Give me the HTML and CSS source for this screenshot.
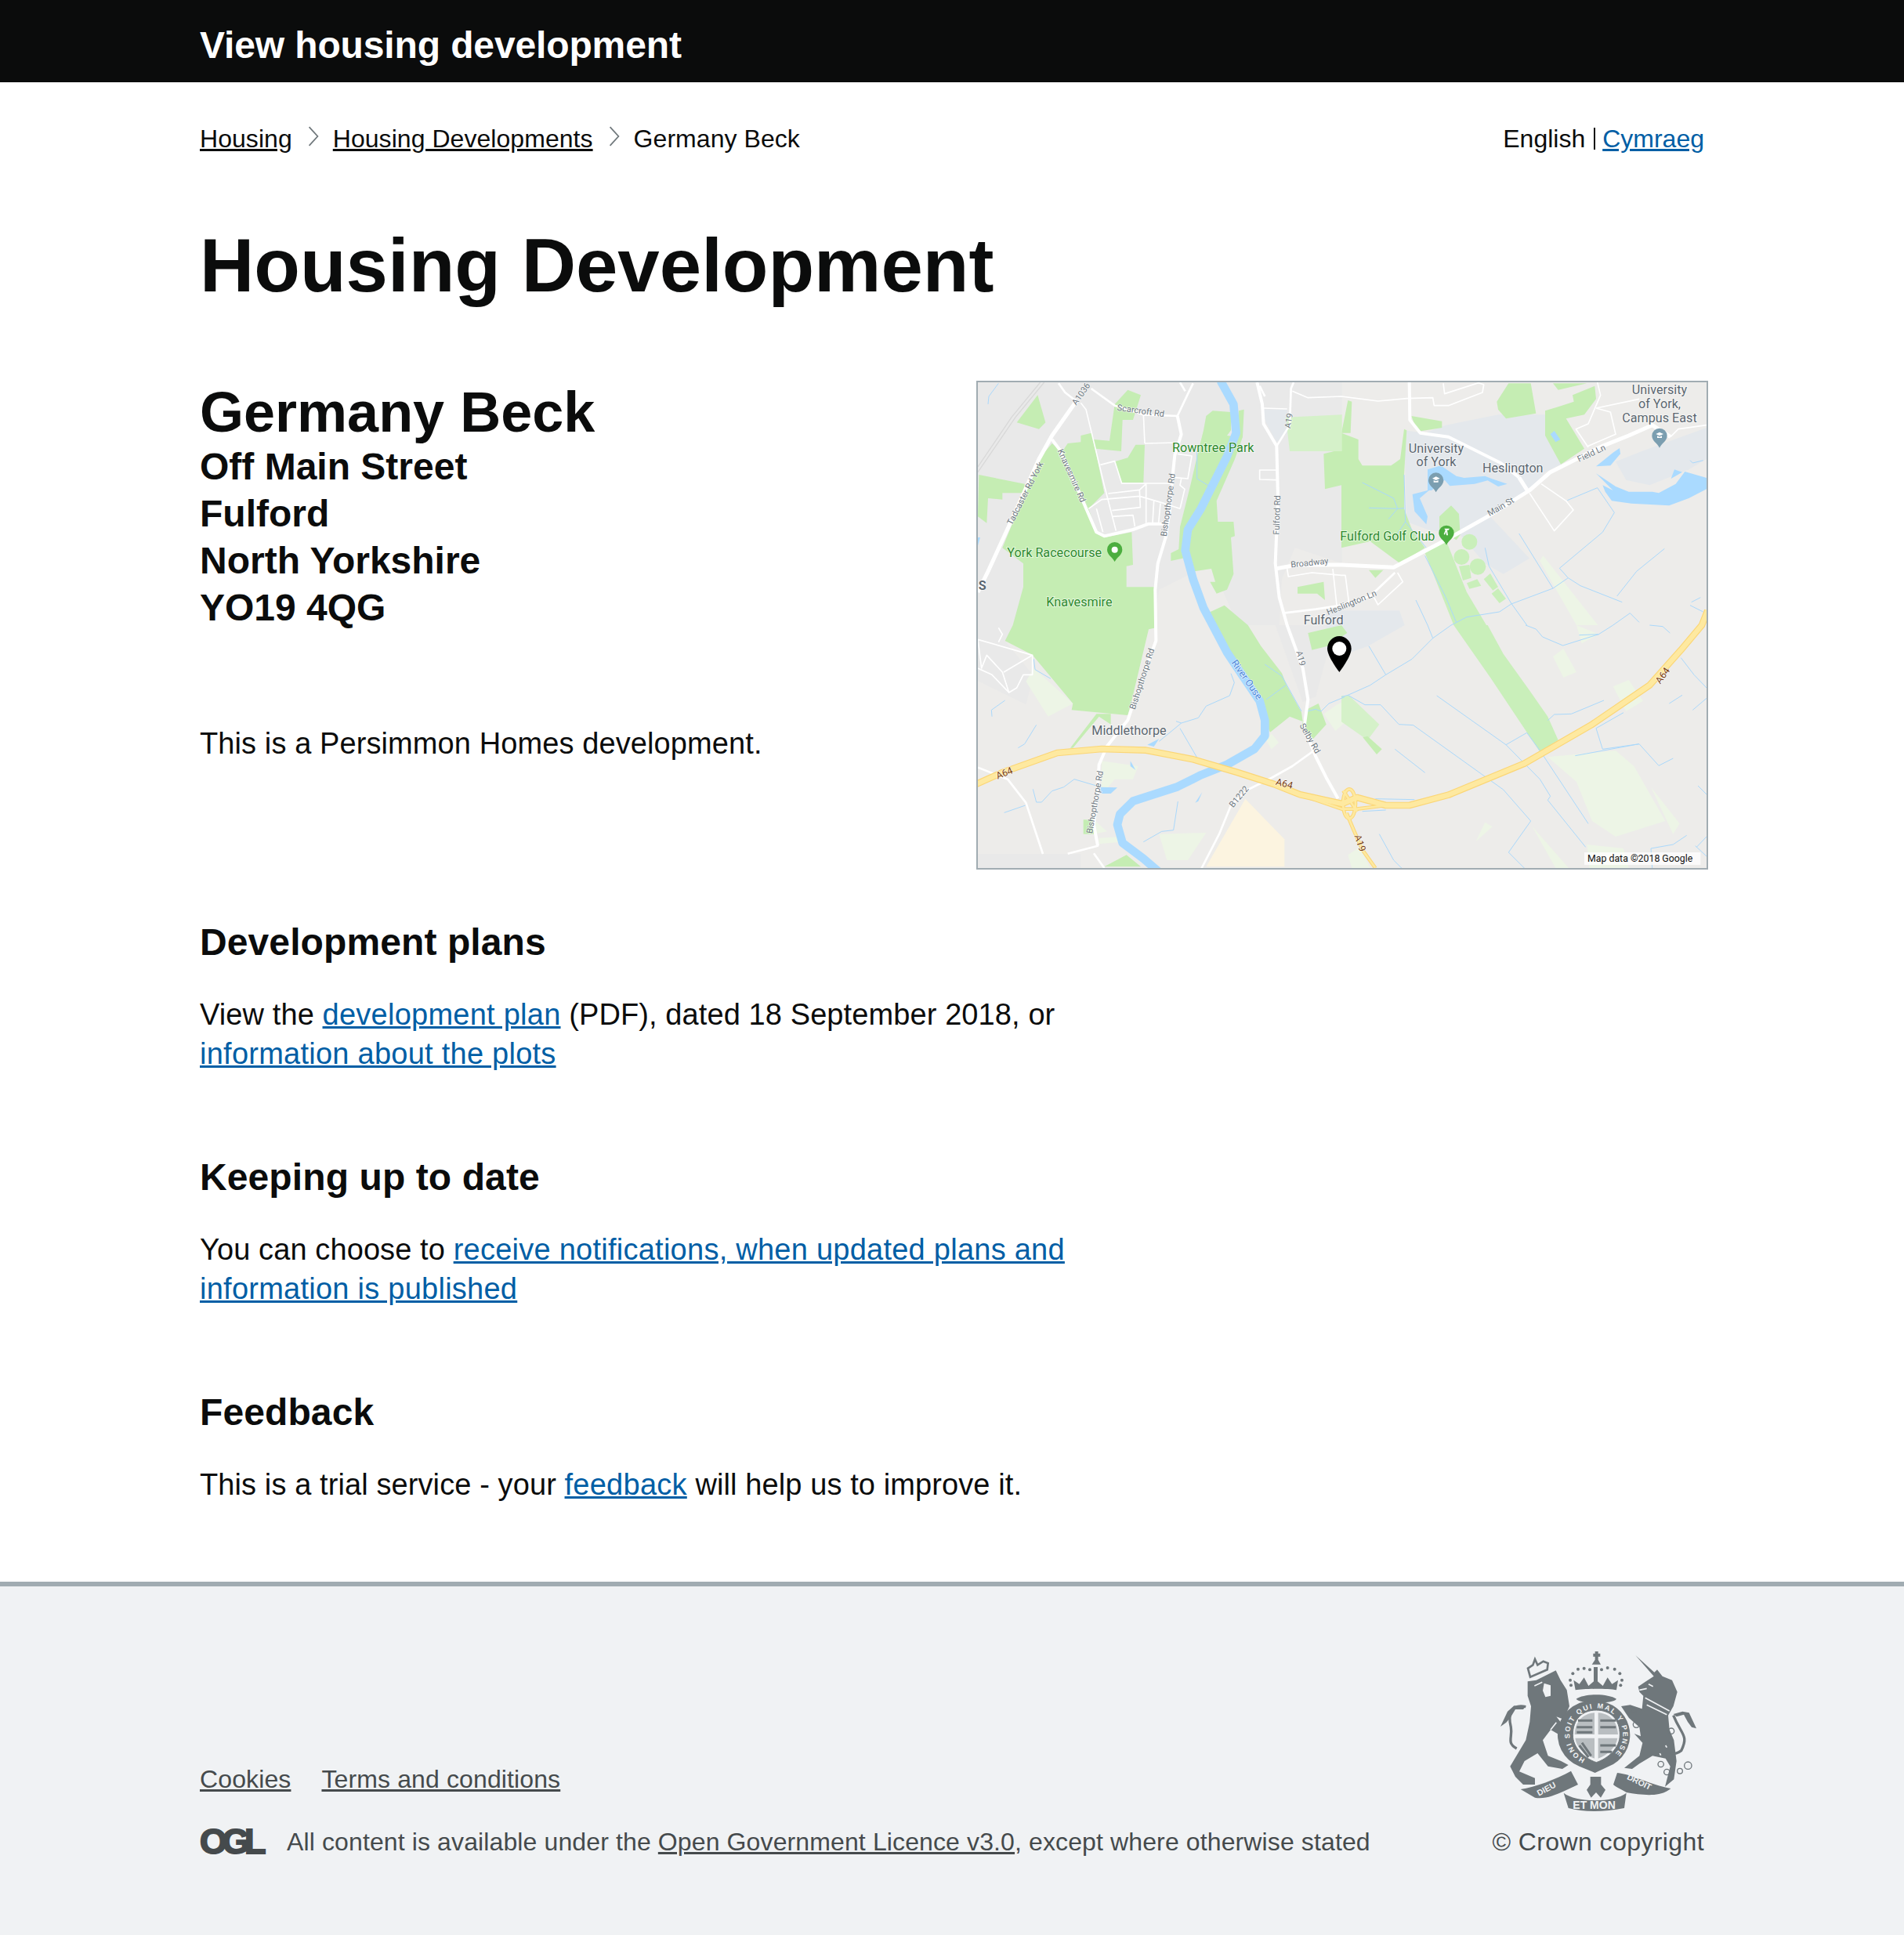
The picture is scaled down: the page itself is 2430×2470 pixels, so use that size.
FILE: index.html
```html
<!DOCTYPE html>
<html lang="en">
<head>
<meta charset="utf-8">
<title>View housing development</title>
<link rel="stylesheet" href="styles.css">
</head>
<body>
<header class="topbar"><div class="topbar-title">View housing development</div></header>
<main class="page">
  <div class="navrow">
    <nav class="crumbs">
      <a href="#" class="crumb-link">Housing</a>
      <svg class="chev" viewBox="0 0 12 24"><path d="M1 1 L11 12 L1 23"/></svg>
      <a href="#" class="crumb-link">Housing Developments</a>
      <svg class="chev" viewBox="0 0 12 24"><path d="M1 1 L11 12 L1 23"/></svg>
      <span>Germany Beck</span>
    </nav>
    <div class="lang"><span>English</span><span class="lang-sep"></span><a href="#" class="link">Cymraeg</a></div>
  </div>
  <h1 class="title">Housing Development</h1>
  <section class="hero">
    <div class="hero-text">
      <h2 class="site-name">Germany Beck</h2>
      <p class="address">Off Main Street<br>Fulford<br>North Yorkshire<br>YO19 4QG</p>
      <p class="para developer">This is a Persimmon Homes development.</p>
    </div>
    <div class="map">
      <svg class="map-svg" viewBox="6 6 2790 1860" preserveAspectRatio="none">
        <rect class="m-base" x="0" y="0" width="2802" height="1872"/>
        <g class="m-urban">
          <path d="M6 6H1400V700L1220 640 1170 760 1160 936H1000L900 700 700 800 680 936H150L110 996 220 1130 190 1240 6 1150Z"/>
          <path d="M1145 936H1398L1340 1060 1300 1210 1250 1230Z"/>
          <path d="M6 1812H400V1866H6Z"/>
        </g>
        <g class="m-campus">
          <path d="M1090 110H1190V200L1150 235 1110 160Z"/>
          <path d="M1638 190 1718 200 1798 170 1998 130 2178 130 2178 210 2238 320 2178 350 2118 420 1958 510 2118 680 2018 740 1948 700 1853 590 1728 570 1648 540Z"/>
          <path d="M2448 310 2548 270 2796 180V300L2728 340 2578 400 2488 380Z"/>
          <path d="M1340 880 1620 880 1640 936 1500 1016 1420 1045 1340 1030Z"/>
        </g>
        <g class="m-tan"><path d="M880 1861 1030 1601 1180 1756V1861Z"/></g>
        <g class="m-pale">
          <g transform="translate(0 936)">
            <path d="M190 215 220 165 370 300 275 350Z"/>
            <path d="M1110 440 1130 415 1158 450 1130 475Z"/>
            <path d="M700 800 880 795 810 900 730 900Z"/>
            <path d="M410 745 450 745 500 790 450 800 410 800Z"/>
            <path d="M480 520 620 540 600 590 530 590 480 650Z"/>
            <path d="M470 815 555 810 555 830 470 838Z"/>
            <path d="M1330 340 1380 305 1410 290 1460 330 1375 405Z"/>
          </g>
          <g transform="translate(1398 936)">
            <path d="M810 120 850 90 900 180 850 200Z"/>
            <path d="M1040 235 1100 210 1155 290 1090 330Z"/>
            <path d="M900 0 985 35 920 70Z"/>
            <path d="M790 505 1050 480 1120 540 1240 750 1050 810 960 750 900 600Z"/>
            <path d="M1185 620 1295 760 1270 800Z"/>
            <path d="M550 755 578 772 515 828Z"/>
            <path d="M730 770 870 930 820 930Z"/>
            <path d="M940 840 1080 855 1100 930 950 930Z"/>
            <path d="M25 880 70 850 110 930 40 930Z"/>
          </g>
          <path d="M2158 690 2298 936H2380L2170 670Z"/>
        </g>
        <g class="m-park">
          <path d="M290 240 325 270 430 490 460 580 490 600 595 580 600 705 575 710 575 790 680 790 688 946 660 952 590 1246 580 1281 365 1261 370 1236 215 1050 110 996 140 936 180 790 180 700 100 640 240 300Z"/>
          <path d="M155 160 235 55 265 160 240 185Z"/>
          <path d="M10 360 185 395 185 430 100 430 100 455 45 450 40 545 6 520Z"/>
          <path d="M350 240 400 235 400 210 440 200 450 225 510 230 530 90 580 35 630 55 600 150 560 150 555 270 455 260 490 430 430 490 330 270Z"/>
          <path d="M530 310 580 295 610 245 645 245 640 390 555 390Z"/>
          <path d="M880 135 905 115 975 120 975 190 960 210 1000 215 1005 115 1025 110 1020 215 990 300 920 460 925 540 985 540 990 595 975 600 985 740 960 800 920 815 895 770 915 770 900 720 835 730 810 670 790 680 745 690 745 660 775 645 780 560 820 400 850 270 870 190Z"/>
          <path d="M885 890 950 860 1040 936 1090 1016 1170 1120 1190 1170 1245 1270 1250 1305 1200 1286 1125 1346 1105 1300 1085 1226 1020 1130 960 1040 905 936Z"/>
          <path d="M1330 280 1370 270 1370 200 1398 200 1463 225 1463 300 1478 325 1588 325 1623 300 1638 185 1648 190 1638 360 1638 490 1668 570 1718 640 1623 700 1508 615 1398 640 1398 400 1335 415Z"/>
          <path d="M1423 75 1438 80 1433 200 1398 200Z"/>
          <path d="M1230 790 1330 770 1335 840 1305 815 1230 815Z"/>
          <path d="M1773 520 1818 478 1848 510 1853 590 1838 610 1773 570Z"/>
          <path d="M1666 135 1783 155 1783 180 1688 195Z"/>
          <path d="M1993 80 2038 10 2123 10 2143 125 2028 145 1998 110Z"/>
          <path d="M2178 115 2228 100 2288 80 2283 55 2368 20 2373 70 2328 130 2258 145 2328 260 2238 320 2178 210Z"/>
          <path d="M2208 10 2338 10 2228 35Z"/>
          <path d="M1503 725 1558 725 1528 755Z"/>
          <g transform="translate(0 936)">
            <path d="M1270 30 1398 0 1420 30 1345 80 1285 95Z"/>
            <path d="M1270 320 1310 300 1340 380 1290 435 1245 385Z"/>
            <path d="M360 470 460 340 515 340 515 380 470 350 370 470Z"/>
            <path d="M490 925 575 880 630 925Z"/>
            <path d="M410 745 450 745 450 800 410 800Z"/>
          </g>
        </g>
        <g class="m-park2">
          <path d="M1718 660 1798 610 1878 810 1953 936 1828 936Z"/>
          <path d="M1828 936 1958 936 2018 1046 2118 1186 2188 1286 2228 1376 2158 1421 2068 1286 1968 1136Z"/>
          <circle cx="1888" cy="617" r="30"/>
          <circle cx="1920" cy="712" r="31"/>
          <circle cx="1858" cy="675" r="30"/>
          <path d="M1848 710 1888 705 1895 755 1863 765Z"/>
          <path d="M1878 775 1918 760 1933 785 1888 797Z"/>
          <path d="M1943 760 1968 738 1998 790 1978 803Z"/>
          <path d="M1973 815 1998 795 2028 835 2003 852Z"/>
        </g>
        <g class="m-park3">
          <path d="M1400 270 1200 270 1185 140 1400 130Z"/>
          <path d="M1398 1206 1428 1206 1543 1316 1498 1376 1398 1306Z"/>
        </g>
        <g class="m-park">
          <path d="M1480 1366 1498 1361 1553 1411 1533 1431Z"/>
        </g>
        <g class="m-water">
          <path d="M1728 340 1778 325 1838 365 1868 372 1948 365 1973 375 2033 395 1998 405 1958 382 1908 395 1813 403 1793 380 1743 420 1733 420 1698 450 1728 520 1723 550 1678 500 1670 435 1728 420Z"/>
          <path d="M2373 328 2438 275 2463 258 2466 280 2428 325Z"/>
          <path d="M2373 355 2448 405 2498 425 2588 425 2613 430 2678 395 2713 348 2796 372V415L2728 450 2653 478 2508 470 2433 460 2408 425 2398 400 2438 420Z"/>
          <path d="M2660 375 2673 340 2703 350Z"/>
          <path d="M2198 205 2213 192 2236 225 2218 235Z"/>
          <path d="M475 1556 540 1558 515 1581 480 1581Z"/>
          <path d="M655 1394 700 1371 680 1401Z"/>
          <path d="M590 1456 610 1491 590 1476Z"/>
          <path d="M838 1616 865 1576 850 1610Z"/>
          <path d="M3 600H15L5 635H3Z"/>
        </g>
        <path class="m-river" d="M935 0 985 90 995 200 960 290 900 410 860 490 810 570 800 650 830 760 870 870 905 936 960 1040 1020 1130 1085 1226 1105 1300 1105 1360 1065 1410 960 1470 860 1510 770 1555 600 1610 550 1660 540 1700 560 1770 640 1830 710 1890"/>
        <g class="m-wline">
          <path d="M845 270 845 375 895 405M45 90 48 60 85 10"/>
          <g transform="translate(1398 0)">
            <path d="M80 390 200 450 215 490 180 530M105 487 215 490 240 488"/>
            <path d="M240 360 245 540 325 640M245 540 215 585"/>
            <path d="M320 670 400 830 440 925M285 840 330 936"/>
            <path d="M550 640 565 710 650 852 710 936M680 585 810 795"/>
            <path d="M420 936 480 905 605 885 650 855 810 795 868 755 835 718 1000 580 1045 505 980 410 865 458"/>
            <path d="M868 755 915 785 1075 848M1055 825 1130 730 1237 643"/>
            <path d="M1340 848 1375 830M1335 860 1385 885M1040 936 1105 890 1140 925M1335 305 1345 315 1385 305"/>
          </g>
          <g transform="translate(0 936)">
            <path d="M60 350 58 325 110 288M160 470 185 455 230 382M220 130 225 170 285 205"/>
            <path d="M217 628 230 678 250 678 290 635 335 620 375 590 460 615M107 718 188 690"/>
            <path d="M700 445 785 375 850 355 880 310 970 270 988 220 975 185M765 368 785 375M780 395 848 512"/>
            <path d="M640 830 710 790 755 785 772 675"/>
            <path d="M1105 150 1170 195 1245 330M1185 230 1110 285M1265 330 1300 322 1320 330 1350 300 1410 275"/>
          </g>
          <g transform="translate(1398 936)">
            <path d="M105 80 170 190M0 275 25 268 110 230 170 190 270 130 350 50 420 0M330 0 350 50"/>
            <path d="M25 268 90 305 150 305 220 380 275 383 550 580 620 630 725 750 640 870 700 930"/>
            <path d="M365 270 630 458 760 590 800 655 790 670 935 850M630 458 710 412 760 480 945 760"/>
            <path d="M205 475 320 565M790 365 815 342 880 340 1005 288"/>
            <path d="M975 395 1000 475 1140 455 1215 538 1270 510M895 500 1140 455M975 395 1080 335"/>
            <path d="M1255 300 1305 268M1345 325 1398 280M1300 125 1350 190 1398 240"/>
            <path d="M705 0 745 15 770 45 848 78 985 35 910 38M985 35 1040 0M1180 0 1230 5 1258 30"/>
            <path d="M145 800 200 900 230 930M1185 855 1270 840 1322 805M1185 855 1190 930M1365 615 1398 648M1355 845 1398 885M1398 810 1360 850"/>
            <path d="M80 713 170 708M130 665 280 668"/>
          </g>
        </g>
        <g class="m-rail"><path d="M260 6 150 140 6 350M245 6 135 140 6 330"/></g>
        <g class="m-road3">
          <path d="M400 85 420 110 490 400 535 575M645 240 770 237M640 130 645 240"/>
          <path d="M475 322 530 308 557 393 740 393M505 432 625 418 650 395M625 418 628 485 520 497M430 490 480 455 625 442 720 470 780 490M650 395V545M520 520 600 515 607 558M460 490 485 580M680 460 675 545M705 470 698 545"/>
          <path d="M770 280 825 288 810 375 755 370M785 375 780 400 798 415 780 490"/>
          <path d="M1100 105 1190 108M1150 342H1085V378L1150 380M1210 40 1270 65 1398 60 1538 78 1648 68 1748 65 1753 95 1808 95 1938 45 1943 15 1923 8 1793 50 1788 10"/>
          <path d="M1190 720 1195 750 1285 735 1398 745 1413 745 1428 860M1365 720 1380 860"/>
          <path d="M1613 735 1633 770 1538 858 1523 830"/>
          <path d="M2118 430 2213 575 2286 495 2258 460 2163 395"/>
          <path d="M2378 6 2390 55 2343 165 2296 185 2343 255M2373 105 2428 120 2448 205 2343 250M2373 105 2538 70"/>
          <path d="M2658 215 2688 185 2796 170"/>
          <g transform="translate(0 936)">
            <path d="M6 55 215 115 215 190 180 190 155 240 125 258 100 180 40 115 20 165ZM105 180 215 115M85 65 100 35 85 10M6 165 60 190 125 258"/>
          </g>
        </g>
        <g class="m-road5">
          <path d="M440 30 530 95 640 130 770 135 815 40 830 10"/>
          <path d="M315 10 340 45 385 80M780 6 800 40"/>
          <path d="M1175 890 1300 875 1398 860 1508 825 1603 735"/>
          <path d="M1150 250 1200 170 1205 30 1215 6M1085 20 1105 60"/>
          <path d="M1300 1411 1210 1476 1130 1521 1040 1566 975 1626 930 1736 860 1872"/>
          <path d="M6 1481 120 1526 190 1616 255 1812M350 1811 465 1781 450 1700M450 1810 490 1866"/>
        </g>
        <g class="m-road8">
          <path d="M770 135 785 205 760 285 750 380 740 500 725 600 695 700 685 800 688 996 650 1100 600 1240 580 1300 540 1350 500 1400 470 1470 465 1560 450 1700 465 1780"/>
          <path d="M1075 6 1095 90 1100 165 1150 250 1155 450 1145 700 1160 830 1190 936 1250 1100 1270 1220 1255 1330 1300 1440 1340 1520 1385 1600"/>
          <path d="M1658 6 1660 150 1700 200 1808 215 2008 315 2078 370"/>
          <path d="M290 225 320 265 395 430 460 580 490 595 600 570 660 548 720 548"/>
        </g>
        <g class="m-road12">
          <path d="M385 75 290 210 240 300 130 545 45 730 6 810"/>
          <path d="M1145 720 1230 705 1398 705 1598 715 1798 610 1958 520 2118 420 2198 350 2398 250 2498 210 2588 170 2658 215"/>
          <path d="M2078 370 2113 425"/>
        </g>
        <g class="m-a64a"><path d="M0 1545 100 1500 310 1425 480 1410 650 1415 830 1450 1000 1500 1140 1545 1240 1585 1400 1620 1458 1596 1568 1626 1658 1626 1808 1586 2098 1466 2358 1316 2578 1166 2698 1031 2778 936 2800 880"/></g>
        <g class="m-a64b">
          <path d="M1240 1585 1400 1640 1458 1640 1568 1626"/>
          <ellipse cx="1428" cy="1620" rx="24" ry="56"/>
          <path d="M1418 1656 1443 1716 1478 1796 1528 1866M1405 1570 1458 1650"/>
        </g>
        <g class="m-a64c"><path d="M0 1545 100 1500 310 1425 480 1410 650 1415 830 1450 1000 1500 1140 1545 1240 1585 1400 1620 1458 1596 1568 1626 1658 1626 1808 1586 2098 1466 2358 1316 2578 1166 2698 1031 2778 936 2800 880"/></g>
        <g class="m-a64d">
          <path d="M1240 1585 1400 1640 1458 1640 1568 1626"/>
          <ellipse cx="1428" cy="1620" rx="24" ry="56"/>
          <path d="M1418 1656 1443 1716 1478 1796 1528 1866M1405 1570 1458 1650"/>
        </g>

        <g class="m-pin-green">
          <path d="M530 618a29 29 0 0 1 29 29c0 20-20 28-29 46-9-18-29-26-29-46a29 29 0 0 1 29-29z"/>
          <path d="M1800 554a29 29 0 0 1 29 29c0 20-20 28-29 46-9-18-29-26-29-46a29 29 0 0 1 29-29z"/>
        </g>
        <g class="m-pin-blue">
          <path d="M1760 352a29 29 0 0 1 29 29c0 20-20 28-29 46-9-18-29-26-29-46a29 29 0 0 1 29-29z"/>
          <path d="M2616 182a29 29 0 0 1 29 29c0 20-20 28-29 46-9-18-29-26-29-46a29 29 0 0 1 29-29z"/>
        </g>
        <g class="m-pin-inner">
          <circle cx="530" cy="647" r="12"/>
          <path d="M1746 374 1760 367 1775 374 1760 381ZM1751 381 1760 385 1769 381V389H1751Z"/>
          <path d="M2602 204 2616 197 2631 204 2616 211ZM2607 211 2616 215 2625 211V219H2607Z"/>
          <path d="M1792 566H1812L1808 572H1803L1806 592 1800 592 1798 578 1794 590 1790 587 1796 572Z"/>
        </g>

        <g class="m-tx m-green">
          <text x="750" y="272">Rowntree Park</text>
          <text x="118" y="676">York Racecourse</text>
          <text x="268" y="864">Knavesmire</text>
          <text x="1393" y="612">Fulford Golf Club</text>
        </g>
        <g class="m-tx m-grey">
          <text x="1761" y="275" class="m-mid">University</text>
          <text x="1761" y="328" class="m-mid">of York</text>
          <text x="1938" y="352">Heslington</text>
          <text x="2616" y="52" class="m-mid">University</text>
          <text x="2616" y="105" class="m-mid">of York,</text>
          <text x="2616" y="158" class="m-mid">Campus East</text>
          <text x="1253" y="934">Fulford</text>
          <text x="442" y="1355">Middlethorpe</text>
          <text x="8" y="800" class="m-es">S</text>
        </g>
        <g class="m-lbl">
          <text transform="translate(410 57) rotate(-55)">A1036</text>
          <text transform="translate(628 126) rotate(8)">Scarcroft Rd</text>
          <text transform="translate(197 436) rotate(-63)">Tadcaster Rd York</text>
          <text transform="translate(355 368) rotate(66)">Knavesmire Rd</text>
          <text transform="translate(745 477) rotate(-82)">Bishopthorpe Rd</text>
          <text transform="translate(1207 155) rotate(-80)">A19</text>
          <text transform="translate(1162 515) rotate(-88)">Fulford Rd</text>
          <text transform="translate(1277 708) rotate(-6)">Broadway</text>
          <text transform="translate(1441 860) rotate(-22)">Heslington Ln</text>
          <text transform="translate(2360 288) rotate(-25)">Field Ln</text>
          <text transform="translate(2013 492) rotate(-30)">Main St</text>
          <text transform="translate(1232 1066) rotate(75)">A19</text>
          <text transform="translate(1268 1375) rotate(60)">Selby Rd</text>
          <text transform="translate(645 1145) rotate(-72)">Bishopthorpe Rd</text>
          <text transform="translate(465 1616) rotate(-80)">Bishopthorpe Rd</text>
          <text transform="translate(1014 1600) rotate(-50)">B1222</text>
        </g>
        <g class="m-lbl m-river-lbl"><text transform="translate(1026 1152) rotate(55)">River Ouse</text></g>
        <g class="m-lbl m-brown">
          <text transform="translate(112 1514) rotate(-22)">A64</text>
          <text transform="translate(1176 1555) rotate(15)">A64</text>
          <text transform="translate(2638 1136) rotate(-55)">A64</text>
          <text transform="translate(1458 1774) rotate(72)">A19</text>
        </g>
        <path class="m-pin-black" d="M1390 978c-25 0-46 21-46 48 0 30 46 90 46 90s46-60 46-90c0-27-21-48-46-48z"/>
        <circle class="m-pin-hole" cx="1390" cy="1026" r="27"/>
        <rect class="m-credit-bg" x="2328" y="1806" width="445" height="48"/>
        <text class="m-credit" x="2340" y="1842">Map data ©2018 Google</text>
      </svg>
    </div>
  </section>

  <section class="block first">
    <h3 class="subhead">Development plans</h3>
    <p class="para">View the <a href="#" class="link">development plan</a> (PDF), dated 18 September 2018, or <a href="#" class="link">information about the plots</a></p>
  </section>
  <section class="block">
    <h3 class="subhead">Keeping up to date</h3>
    <p class="para">You can choose to <a href="#" class="link">receive notifications, when updated plans and information is published</a></p>
  </section>
  <section class="block">
    <h3 class="subhead">Feedback</h3>
    <p class="para">This is a trial service - your <a href="#" class="link">feedback</a> will help us to improve it.</p>
  </section>
</main>
<footer class="footer">
  <div class="footer-inner">
    <div class="footer-left">
      <div class="footer-links"><a href="#" class="foot-link">Cookies</a><a href="#" class="foot-link">Terms and conditions</a></div>
      <div class="licence"><span class="ogl">OGL</span><span>All content is available under the <a href="#" class="foot-link">Open Government Licence v3.0</a>, except where otherwise stated</span></div>
    </div>
    <div class="footer-right">
      <svg class="crest" viewBox="108 80 750 612">
        <g class="c-fill">
          <path d="M463 88H470V80H482V88H490V100H482V112L492 130H458L470 112V100H463Z"/>
          <path d="M395 228 388 190 410 205 428 180 445 212 465 195V140H480V195L500 212 518 180 535 205 558 190 552 228C520 222 430 222 395 228Z"/>
          <path d="M398 262C430 240 520 240 552 262 540 282 410 282 398 262Z"/>
          <path d="M212 195 245 190 320 153 338 190 362 228 372 290 350 340 322 330 355 372 385 410 355 440 335 400 300 380 270 420 290 480 340 500 368 515 345 530 290 520 250 470 200 500 180 540 240 565 240 590 195 590 165 560 145 520 175 470 205 420 220 350 225 290 212 250Z"/>
          <path d="M108 368 135 310 160 288 205 290 195 302 165 302 145 335 130 352Z"/>
          <path d="M625 95 697 160 708 150 728 175 765 190 785 235 770 290 750 325 755 380 772 420 782 500 772 570 738 598 758 520 740 490 690 480 640 510 612 530 582 526 640 480 652 430 620 395 645 405 640 370 600 335 570 290 605 285 650 300 655 250 640 235 635 215 665 195 695 175Z"/>
          <path d="M858 375 830 315 805 310 770 320 782 330 810 322 825 350 840 370Z"/>
          <path d="M185 608C240 600 320 570 378 538L405 590C350 615 290 650 240 640Z"/>
          <path d="M350 622C400 660 540 660 590 622L582 680C500 696 430 696 368 680Z"/>
          <path d="M555 545C610 550 680 590 760 605 720 640 650 630 590 620 575 610 550 600 540 590Z"/>
          <path d="M452 560H493V590L510 610 492 640 474 620 455 640 438 610 452 590Z"/>
        </g>
        <g class="c-linecrown">
          <path d="M213 145 222 178 287 150 290 125 272 118 250 132 240 110 232 132Z"/>
        </g>
        <path class="c-ring" d="M475 270A130 130 0 0 1 540 512L470 545 410 520A130 130 0 0 1 475 270Z"/>
        <g class="c-dots">
          <circle cx="375" cy="190" r="6"/><circle cx="385" cy="165" r="6"/><circle cx="405" cy="148" r="6"/><circle cx="428" cy="145" r="6"/><circle cx="450" cy="150" r="6"/>
          <circle cx="495" cy="150" r="6"/><circle cx="518" cy="143" r="6"/><circle cx="545" cy="148" r="6"/><circle cx="565" cy="165" r="6"/><circle cx="573" cy="190" r="6"/>
          <circle cx="378" cy="210" r="6"/><circle cx="568" cy="210" r="6"/>
        </g>
        <g class="c-rings">
          <circle cx="618" cy="305" r="10"/><circle cx="628" cy="360" r="12"/>
          <circle cx="762" cy="385" r="11"/><circle cx="722" cy="512" r="11"/><circle cx="745" cy="542" r="11"/><circle cx="795" cy="538" r="10"/><circle cx="826" cy="517" r="14"/>
        </g>
        <path class="c-tail" d="M205 292C150 280 135 320 148 370 155 410 130 430 170 452"/>
        <path class="c-tail" d="M770 325C800 400 830 400 800 460 780 475 775 470 760 470"/>
        <path class="c-shield" d="M475 305C530 305 565 340 565 400 565 450 520 490 475 505 430 490 385 450 385 400 385 340 420 305 475 305Z"/>
        <path class="c-quart" d="M468 315C425 318 395 345 392 398H468ZM482 315V398H558C555 345 525 318 482 315ZM482 412V490C520 475 552 445 556 412ZM468 412H394C398 445 430 478 468 490Z"/>
        <g class="c-bars">
          <path d="M405 345H460M400 370H460M400 390H460M490 345H550M490 370H550M490 440H550M490 465H535M420 430 455 480M410 440 445 485"/>
        </g>
        <path class="c-white" d="M275 202 300 210 300 250 280 255 270 230Z"/>
        <g class="c-whiteline">
          <path d="M238 212 268 198M300 380 322 352M662 258 755 308M668 285 745 322M675 205 692 214M640 228 668 222M740 440 745 448M718 470 722 478"/>
        </g>
        <g class="c-tx">
          <path id="crestArc" class="c-none" d="M432 492A102 102 0 1 1 518 492"/>
          <text class="c-ringtx"><textPath href="#crestArc" textLength="515">HONI SOIT QUI MAL Y PENSE</textPath></text>
          <text transform="translate(255 634) rotate(-28)">DIEU</text>
          <text x="385" y="682" class="c-small">ET MON</text>
          <text transform="translate(590 568) rotate(26)">DROIT</text>
        </g>
      </svg>
      <div class="copyright">© Crown copyright</div>
    </div>
  </div>
</footer>
</body>
</html>
```

FILE: styles.css
```css
* { box-sizing: border-box; }
html, body { margin: 0; padding: 0; }
body {
  font-family: "Liberation Sans", Arial, sans-serif;
  color: #0b0c0c;
  background: #fff;
}
.topbar { background: #0b0c0c; height: 105px; padding: 10px 255px 0; display: flex; align-items: center; }
.topbar-title { color: #fff; font-size: 48px; font-weight: 700; line-height: 1; letter-spacing: -.13px; }
.page { padding: 0 250px 0 255px; }
.navrow { display: flex; justify-content: space-between; padding: 47px 5px 0 0; font-size: 32px; line-height: 50px; }
.crumbs { display: flex; align-items: center; letter-spacing: .05px; }
.crumb-link { color: #0b0c0c; }
.chev { width: 14px; height: 26px; margin: 0 18px 6px 20px; fill: none; stroke: #6f777b; stroke-width: 1.6; }
.lang { display: flex; align-items: center; }
.lang-sep { width: 2px; height: 28px; background: #0b0c0c; margin: 0 9px 0 11px; }
.link { color: #005ea5; }
.title { font-size: 96px; line-height: 110px; font-weight: 700; margin: 82px 0 0; }
.hero { display: flex; justify-content: space-between; margin-top: 92px; }
.site-name { font-size: 72px; line-height: 80px; margin: 0; font-weight: 700; }
.address { font-size: 48px; line-height: 60px; font-weight: 700; margin: 0; }
.para { font-size: 38px; line-height: 50px; margin: 0; max-width: 1150px; letter-spacing: .1px; }
.para .link { letter-spacing: .25px; }
.developer { margin-top: 118px; }
.map { width: 934px; height: 624px; border: 2px solid #a1acb2; flex: none; }
.map-svg { display: block; width: 930px; height: 620px; }
.block { margin-top: 103px; }
.block.first { margin-top: 63px; }
.subhead { font-size: 48px; line-height: 60px; font-weight: 700; margin: 0 0 37px; letter-spacing: .1px; }
.footer { margin-top: 99px; background: #f0f2f4; border-top: 6px solid #a1acb2; padding: 83px 255px 94px; color: #454a4c; }
.footer-inner { display: flex; justify-content: space-between; align-items: flex-end; }
.footer-left { font-size: 32px; line-height: 50px; letter-spacing: .12px; }
.footer-links { display: flex; gap: 39px; margin-bottom: 30px; }
.foot-link { color: #454a4c; }
.licence { display: flex; align-items: center; gap: 28px; }
.ogl { font-size: 45px; font-weight: 700; letter-spacing: -6.5px; width: 83px; line-height: 50px; -webkit-text-stroke: 2px #454a4c; }
.footer-right { display: flex; flex-direction: column; align-items: center; font-size: 32px; line-height: 50px; }
.copyright { letter-spacing: .4px; }
.crest { display: block; width: 250px; height: 204px; margin-bottom: 14px; }
.c-fill, .c-dots, .c-ring { fill: #6f777b; }
.c-linecrown { fill: none; stroke: #6f777b; stroke-width: 8; }
.c-rings { fill: none; stroke: #6f777b; stroke-width: 4; }
.c-tail { fill: none; stroke: #6f777b; stroke-width: 10; }
.c-shield { fill: #f0f2f4; stroke: #6f777b; stroke-width: 3; }
.c-quart { fill: #b9bec1; }
.c-bars { fill: none; stroke: #6f777b; stroke-width: 9; }
.c-white { fill: #f0f2f4; }
.c-whiteline { fill: none; stroke: #f0f2f4; stroke-width: 5; }
.c-none { fill: none; stroke: none; }
.c-tx { font-family: "Liberation Sans", sans-serif; font-weight: 700; font-size: 32px; fill: #f0f2f4; }
.c-ringtx { font-size: 27px; }
.c-small { font-size: 42px; }

.m-base { fill: #edecea; }
.m-urban { fill: #e9e9e9; }
.m-campus { fill: #e4e8ec; }
.m-tan { fill: #fcf4e0; }
.m-pale { fill: #edf5e6; }
.m-park { fill: #c5edb3; }
.m-park2 { fill: #c9efba; }
.m-park3 { fill: #d5f1c9; }
.m-water { fill: #aadaff; }
.m-river { fill: none; stroke: #aadaff; stroke-width: 32; stroke-linejoin: round; }
.m-wline { fill: none; stroke: #aad8fb; stroke-width: 3; }
.m-rail { fill: none; stroke: #d8d8d8; stroke-width: 4; }
.m-road3, .m-road5, .m-road8, .m-road12 { fill: none; stroke: #fff; stroke-linejoin: round; }
.m-road3 { stroke-width: 5; }
.m-road5 { stroke-width: 8; }
.m-road8 { stroke-width: 12; }
.m-road12 { stroke-width: 15; }
.m-a64a { fill: none; stroke: #fbd676; stroke-width: 26; stroke-linejoin: round; }
.m-a64b { fill: none; stroke: #fbd676; stroke-width: 14; }
.m-a64c { fill: none; stroke: #fee9a0; stroke-width: 19; stroke-linejoin: round; }
.m-a64d { fill: none; stroke: #fee9a0; stroke-width: 8; }
.m-pin-green { fill: #4cae3f; }
.m-pin-blue { fill: #7b9eb0; }
.m-pin-inner { fill: #fff; }
.m-pin-black { fill: #000; }
.m-pin-hole { fill: #fff; }
.m-tx { font-family: Roboto, "Liberation Sans", sans-serif; font-size: 48.5px; stroke: #fff; stroke-width: 5; stroke-opacity: .7; paint-order: stroke; }
.m-green { fill: #2d8a2d; }
.m-grey { fill: #5b6670; }
.m-mid { text-anchor: middle; }
.m-es { font-weight: 700; }
.m-lbl { font-family: Roboto, "Liberation Sans", sans-serif; font-size: 33px; fill: #6d7780; text-anchor: middle; stroke: #fff; stroke-width: 4; stroke-opacity: .7; paint-order: stroke; }
.m-river-lbl { fill: #4a84d8; font-size: 37px; }
.m-brown { fill: #7a3e10; font-size: 37px; }
.m-credit-bg { fill: #fff; fill-opacity: .75; }
.m-credit { font-family: Roboto, "Liberation Sans", sans-serif; font-size: 37px; fill: #111; }
```
